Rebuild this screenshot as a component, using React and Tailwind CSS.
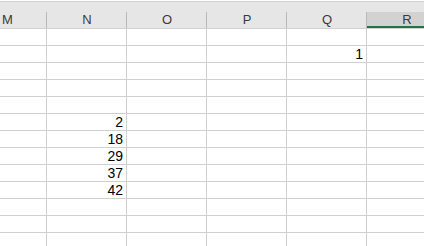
import React from "react";

const cols = [
  { name: "M", w: "w-[47px]" },
  { name: "N", w: "w-[80px]" },
  { name: "O", w: "w-[80px]" },
  { name: "P", w: "w-[80px]" },
  { name: "Q", w: "w-[80px]" },
  { name: "R", w: "w-[80px]" },
];

// values by row index -> column name
const data = {
  1: { Q: "1" },
  5: { N: "2" },
  6: { N: "18" },
  7: { N: "29" },
  8: { N: "37" },
  9: { N: "42" },
};

const App = () => {
  const rows = Array.from({ length: 13 }, (_, i) => i);

  return (
    <div
      className="w-[424px] h-[246px] overflow-hidden bg-white"
      style={{ fontFamily: '"Liberation Sans", Arial, sans-serif' }}
    >
      {/* Column headers */}
      <div className="pt-px bg-white">
        <div className="flex h-[28px] bg-[#e6e6e6] border-t border-[#d0d0d0] border-b border-[#ababab]">
          {cols.map((c) => (
            <div
              key={c.name}
              className={`${c.w} shrink-0 relative flex items-end justify-center`}
            >
              {c.name === "R" && (
                <div className="absolute left-0 right-0 top-[10px] bottom-0 bg-[#d2d2d2] border-b-2 border-[#217346]" />
              )}
              {c.name !== "R" && (
                <div className="absolute right-0 top-[10px] bottom-0 w-px bg-[#b8b8b8]" />
              )}
              <span
                className={`relative text-[13px] leading-[15px] mb-[1px] text-[#3a3a3a] ${
                  c.name === "M" ? "mr-[32px]" : ""
                }`}
              >
                {c.name}
              </span>
            </div>
          ))}
        </div>
      </div>

      {/* Grid rows */}
      {rows.map((r) => (
        <div key={r} className="flex h-[17px]">
          {cols.map((c) => (
            <div
              key={c.name}
              className={`${c.w} shrink-0 border-r border-b border-[#d0d0d0] flex items-center justify-end pr-[3px] text-[14px] leading-[16px] text-black`}
            >
              {data[r] && data[r][c.name]}
            </div>
          ))}
        </div>
      ))}
    </div>
  );
};

export default App;
